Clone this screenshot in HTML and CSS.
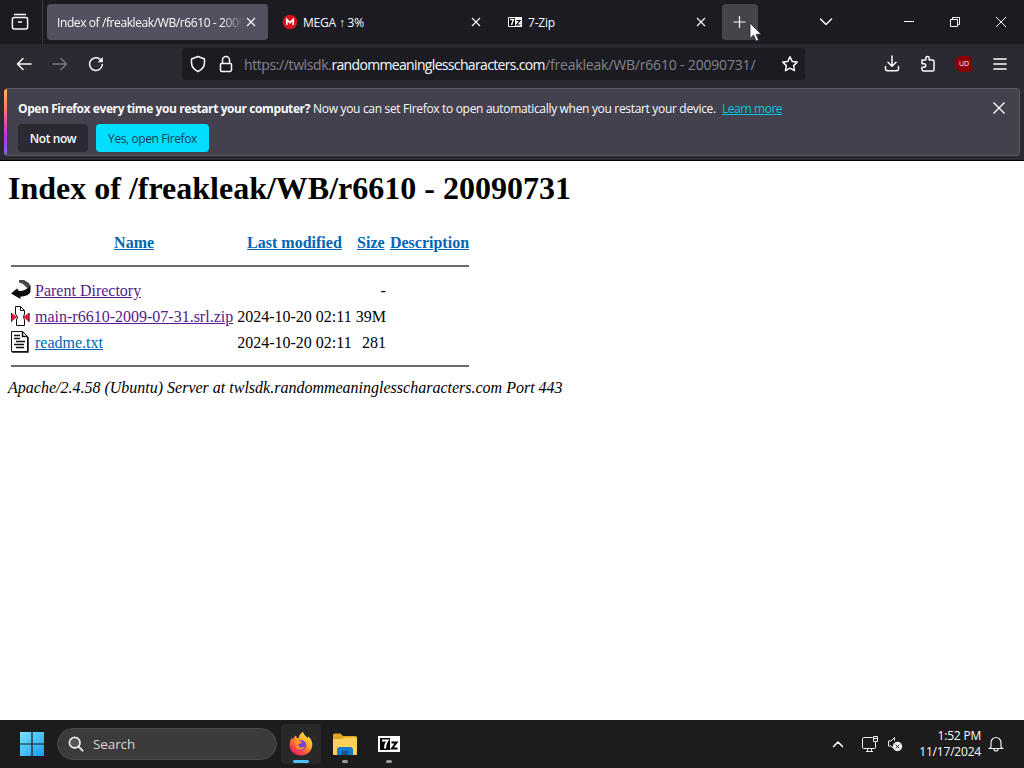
FILE: index.html
```
<!DOCTYPE html>
<html lang="en">
<head>
    <meta charset="UTF-8">
    <meta name="viewport" content="width=device-width, initial-scale=1.0">
    <title>Index of /freakleak/WB/r6610 - 20090731</title>
    <link rel="stylesheet" href="styles.css">
</head>
<body>
    <div class="tabbar">
        <div class="view-button">
            <svg width="18" height="18" viewBox="0 0 18 18" class="line"><path d="M3.5 1.5h11M3 4.500h12a1.600 1.600 0 0 1 1.600 1.600v8a2 2 0 0 1-2 2H3.400a2 2 0 0 1-2-2v-8A1.600 1.600 0 0 1 3 4.500zM7.500 9h3"/></svg>
        </div>
        <div class="tab active">
            <span class="tab-title first-title">Index of /freakleak/WB/r6610 - 20090731</span>
            <svg class="tab-close" width="10" height="10" viewBox="0 0 10 10"><path d="M1 1l8 8M9 1l-8 8"/></svg>
        </div>
        <div class="tab">
            <svg class="tab-icon" width="16" height="16" viewBox="0 0 16 16"><circle cx="8" cy="8" r="7.300" fill="#d9111f"/><path d="M4.800 11V5.500L8 8.700l3.200-3.200V11" fill="none" stroke="#fff" stroke-width="1.700"/></svg>
            <span class="tab-title">MEGA ↑ 3%</span>
            <svg class="tab-close" width="10" height="10" viewBox="0 0 10 10"><path d="M1 1l8 8M9 1l-8 8"/></svg>
        </div>
        <div class="tab">
            <svg class="tab-icon" width="16" height="16" viewBox="0 0 16 16"><path d="M1.500 3.500h13v9h-13z" fill="#000" stroke="#fff"/><path d="M8 3h7v10H8z" fill="#fff"/><path d="M3 5.500h3.500L4.500 11" fill="none" stroke="#fff" stroke-width="1.500"/><path d="M9.500 6.500h3.500l-3.500 4.500h4" fill="none" stroke="#000" stroke-width="1.200"/></svg>
            <span class="tab-title">7-Zip</span>
            <svg class="tab-close" width="10" height="10" viewBox="0 0 10 10"><path d="M1 1l8 8M9 1l-8 8"/></svg>
        </div>
        <div class="new-tab">
            <svg width="14" height="14" viewBox="0 0 14 14" class="line thin"><path d="M6.500 1.500v11M1 7h11"/></svg>
            <svg class="cursor" width="14" height="21" viewBox="0 0 14 21"><path d="M1 1v15.500l3.600-3.400 2.500 6 2.500-1-2.500-5.800h5z" fill="#fff" stroke="#222" stroke-width=".8"/></svg>
        </div>
        <div class="window-buttons">
            <svg width="14" height="14" viewBox="0 0 14 14" class="line"><path d="M1.500 4L7 9.500 12.500 4"/></svg>
            <svg class="minimize" width="12" height="12" viewBox="0 0 12 12"><path d="M1 5.500h10"/></svg>
            <svg class="restore" width="12" height="12" viewBox="0 0 12 12"><path d="M1.500 3.500h7v7h-7zM3.500 3V1.500h7v7H9"/></svg>
            <svg class="close" width="12" height="12" viewBox="0 0 12 12"><path d="M1 1l10 10M11 1L1 11"/></svg>
        </div>
    </div>

    <div class="navbar">
        <div class="nav-buttons">
            <svg width="16" height="16" viewBox="0 0 16 16" class="line"><path d="M15 8H1.500M7 2.500L1.500 8 7 13.500"/></svg>
            <svg width="16" height="16" viewBox="0 0 16 16" class="line disabled"><path d="M1 8h13.500M9 2.500L14.500 8 9 13.500"/></svg>
            <svg width="16" height="16" viewBox="0 0 16 16" class="line"><path d="M14.300 8.500A6.400 6.400 0 1 1 11.500 2.800L13.500 4.500"/><path d="M14.800 1v5.200H9.600z" fill="#fbfbfe" stroke="none"/></svg>
        </div>
        <div class="urlbar">
            <svg width="16" height="18" viewBox="0 0 16 18" class="line"><path d="M8 1.500L14.500 4v3.500c0 4-2.500 7.300-6.500 9-4-1.700-6.500-5-6.500-9V4z"/></svg>
            <svg width="14" height="18" viewBox="0 0 14 18" class="line"><path d="M3.500 8V5a3.500 3.500 0 0 1 7 0v3M2.500 8.500h9a1 1 0 0 1 1 1v5.500a1.500 1.500 0 0 1-1.500 1.500H3A1.500 1.500 0 0 1 1.500 15V9.500a1 1 0 0 1 1-1z"/></svg>
            <span class="url"><span class="scheme">https://twlsdk.</span><b>randommeaninglesscharacters.com</b>/freakleak/WB/r6610 - 20090731/</span>
            <svg width="18" height="18" viewBox="0 0 18 18" class="line"><path d="M9 1.800l2.200 4.600 5 .7-3.600 3.500.9 5-4.500-2.400-4.500 2.400.9-5L1.800 7.100l5-.7z"/></svg>
        </div>
        <div class="toolbar">
            <svg width="16" height="18" viewBox="0 0 16 18" class="line"><path d="M8 1v10M4 7.300l4 4 4-4M1.500 11.500v2.300a2 2 0 0 0 2 2h9a2 2 0 0 0 2-2v-2.300"/></svg>
            <svg width="16" height="18" viewBox="0 0 16 18" class="line"><path d="M2 5h3.800V3.300a1.700 1.700 0 0 1 3.400 0V5h3.300a1.500 1.500 0 0 1 1.500 1.500v8a1.500 1.500 0 0 1-1.500 1.500h-9A1.500 1.500 0 0 1 2 14.500v-2.200h2a1.700 1.700 0 0 0 0-3.500H2z"/></svg>
            <div class="ublock">UD</div>
            <svg width="14" height="14" viewBox="0 0 14 14" class="line menu"><path d="M1 2h12M1 7h12M1 12h12"/></svg>
        </div>
    </div>

    <div class="notification-wrap">
        <div class="notification">
            <div class="notification-body">
                <p class="message"><b>Open Firefox every time you restart your computer?</b> <span class="detail">Now you can set Firefox to open automatically when you restart your device.</span> <a href="#">Learn more</a></p>
                <div class="actions">
                    <button class="action">Not now</button>
                    <button class="action primary">Yes, open Firefox</button>
                </div>
            </div>
            <svg class="dismiss" width="14" height="14" viewBox="0 0 14 14"><path d="M1.500 1.500l11 11M12.500 1.500l-11 11"/></svg>
        </div>
    </div>

    <div class="page">
        <h1>Index of /freakleak/WB/r6610 - 20090731</h1>
        <table>
            <tr><th class="icon"></th><th><a href="#">Name</a></th><th><a href="#">Last modified</a></th><th><a href="#">Size</a></th><th><a href="#">Description</a></th></tr>
            <tr><th colspan="5"><hr></th></tr>
            <tr>
                <td class="icon"><svg width="20" height="22" viewBox="0 0 20 22"><path d="M8 1h5l5 3 1.500 4-3.500 1-4-4-4-1.500z" fill="#4a4a4a"/><path d="M19.500 6v6c0 3-4 5.500-10 5.500V20L0 14.500l6-5 2 2.500c5 0 8.500-2 11.500-6z" fill="#0c0c0c"/></svg></td>
                <td><a href="#" class="visited">Parent Directory</a></td><td>&nbsp;</td><td class="size">&nbsp; - </td><td>&nbsp;</td>
            </tr>
            <tr>
                <td class="icon"><svg width="20" height="22" viewBox="0 0 20 22"><path d="M4.500 7V1.500h5l4 4V9l-1 3 1 3v5.500h-8V15l1-3-2-3z" fill="#fff" stroke="#111"/><path d="M9.500 1.500v4h4" fill="none" stroke="#111"/><path d="M0 8l5.500 4L0 16.500zM18 8l-5 4 5 4.500z" fill="#e21b3c" stroke="#e21b3c"/><path d="M.5 8v9M18 8v9" stroke="#333"/></svg></td>
                <td><a href="#" class="visited">main-r6610-2009-07-31.srl.zip</a></td><td class="size">2024-10-20 02:11</td><td class="size">39M</td><td>&nbsp;</td>
            </tr>
            <tr>
                <td class="icon"><svg width="20" height="22" viewBox="0 0 20 22"><path d="M.5.500h11l5 5v15H.5z" fill="#fff" stroke="#111"/><path d="M11.500.500v5h5M17 6v15H1" fill="none" stroke="#111" stroke-width="1.500"/><path d="M3 4.500h6M3 7.500h6M5 10.500h9M3 13.500h10M5 16.500h8" stroke="#111" stroke-width="1.500"/></svg></td>
                <td><a href="#">readme.txt</a></td><td class="size">2024-10-20 02:11</td><td class="size">281</td><td>&nbsp;</td>
            </tr>
            <tr><th colspan="5"><hr></th></tr>
        </table>
        <address>Apache/2.4.58 (Ubuntu) Server at twlsdk.randommeaninglesscharacters.com Port 443</address>
    </div>

    <div class="taskbar">
        <svg class="start" width="24" height="24" viewBox="0 0 24 24">
            <linearGradient id="win" x1="0" y1="0" x2="1" y2="1"><stop offset="0" stop-color="#7fe3fb"/><stop offset="1" stop-color="#169cf0"/></linearGradient>
            <path d="M0 0h11.400v11.400H0zM12.600 0H24v11.400H12.600zM0 12.600h11.400V24H0zM12.600 12.600H24V24H12.600z" fill="url(#win)"/>
        </svg>
        <div class="search">
            <svg width="16" height="16" viewBox="0 0 16 16"><circle cx="6.700" cy="6.700" r="5.300" fill="#555" stroke="#e8e8e8" stroke-width="1.800"/><path d="M10.600 10.600l4 4" stroke="#e8e8e8" stroke-width="2" stroke-linecap="round"/></svg>
            <span>Search</span>
        </div>
        <div class="app current">
            <svg width="24" height="24" viewBox="0 0 24 24">
                <linearGradient id="fox" x1=".85" y1=".05" x2=".2" y2="1"><stop offset="0" stop-color="#fff04a"/><stop offset=".45" stop-color="#ff9a22"/><stop offset=".75" stop-color="#ff4540"/><stop offset="1" stop-color="#e81b68"/></linearGradient>
                <path d="M14 0c1 3 3 4 4.500 6l1-1.500C22 7 23.500 10 23.300 13c-.3 6-5 10.500-11.300 10.500C5.500 23.500.700 19 .700 13c0-3.500 1-5.500 2.300-7.500L4 8c.5-2 1.500-3.500 3-4.500.2 1.500 1 2.500 2.500 3 .5-3 2-5.500 4.500-6.500z" fill="url(#fox)"/>
                <circle cx="12" cy="13.200" r="5.300" fill="#7b42d8"/><path d="M6.500 9.500C9 8 11 8.500 13 10c-1 1.800-3 1.500-4 3 .5 3 5 3.500 7 .5-.5 5-7.500 6-9.500 1z" fill="#ff9222"/>
            </svg>
            <i class="indicator"></i>
        </div>
        <div class="app">
            <svg width="26" height="24" viewBox="0 0 26 24"><path d="M1 3A1.500 1.500 0 0 1 2.500 1.500h6L11 4h12.500A1.500 1.500 0 0 1 25 5.500V21H1z" fill="#e2a51e"/><path d="M1 7h9l2-1.500h13V22a1 1 0 0 1-1 1H2a1 1 0 0 1-1-1z" fill="#ffd05a"/><path d="M5 23v-5a3 3 0 0 1 3-3h10a3 3 0 0 1 3 3v5z" fill="#1979cc"/><path d="M9.500 23v-3a1 1 0 0 1 1-1h5a1 1 0 0 1 1 1v3z" fill="#125793"/></svg>
            <i class="indicator"></i>
        </div>
        <div class="app">
            <svg width="22" height="24" viewBox="0 0 22 24"><path d="M0 4h22v16H0z" fill="#fff"/><path d="M2 6h10v12H2z" fill="#000"/><path d="M4 8.500h5.500C7.500 11 7 13 7 16.500" fill="none" stroke="#fff" stroke-width="2"/><path d="M13.500 10.500h5l-4.500 6h5.500" fill="none" stroke="#000" stroke-width="2"/></svg>
            <i class="indicator"></i>
        </div>
        <div class="tray">
            <svg width="12" height="8" viewBox="0 0 12 8" class="line"><path d="M1.500 6.500L6 2l4.500 4.500"/></svg>
            <svg class="network" width="18" height="18" viewBox="0 0 18 18"><path d="M11.500 2.500h-9a1 1 0 0 0-1 1v9a1 1 0 0 0 1 1h11a1 1 0 0 0 1-1V8M5 16.500h7M6.500 14v2M10.500 14v2M12.500 1.500h4v5h-4zM14.500 7v6M12.500 3.500h4"/></svg>
            <svg class="volume" width="16" height="16" viewBox="0 0 16 16"><path d="M7.500 1.500v3M7.500 1.500L4 5H1.500v5H4l2 2" fill="none" stroke="#eee"/><circle cx="10.500" cy="10.500" r="4.700" fill="#eee"/><path d="M8.700 8.700l3.600 3.600M12.300 8.700l-3.600 3.600" stroke="#222"/></svg>
            <div class="clock"><span class="time">1:52 PM</span><span class="date">11/17/2024</span></div>
            <svg class="bell" width="16" height="16" viewBox="0 0 16 16"><path d="M3 11V6.500a5 5 0 0 1 10 0V11l1.500 1.500h-13zM6 13a2 2 0 0 0 4 0"/></svg>
        </div>
    </div>
</body>
</html>
```
FILE: styles.css
```
* {
    box-sizing: border-box;
}
body {
    margin: 0;
    width: 1024px;
    height: 768px;
    overflow: hidden;
    display: flex;
    flex-direction: column;
    background-color: white;
    font-family: "Open Sans", "Noto Sans", sans-serif;
    font-size: 12px;
    color: #fbfbfe;
}
svg {
    display: block;
    flex-shrink: 0;
    fill: none;
}
.line {
    stroke: #fbfbfe;
    stroke-width: 1.5;
    stroke-linecap: round;
    stroke-linejoin: round;
}
.line.thin {
    stroke-width: 1.2;
}
.line.disabled {
    stroke: #77767e;
}

/* tabs */
.tabbar {
    height: 44px;
    background-color: #1c1b22;
    display: flex;
    align-items: center;
    flex-shrink: 0;
}
.view-button {
    width: 43px;
    height: 44px;
    padding: 13px 11px;
    border-right: 1px solid #3a3944;
    margin-right: 4px;
}
.tab {
    width: 221px;
    height: 36px;
    margin-right: 4px;
    padding: 0 12px 0 10px;
    display: flex;
    align-items: center;
    border-radius: 4px;
}
.tab.active {
    background-color: #53515f;
}
.tab-icon {
    margin-right: 5px;
}
.tab-title {
    flex: 1;
    white-space: nowrap;
    overflow: hidden;
    letter-spacing: -0.2px;
}
.first-title {
    letter-spacing: -0.4px;
    -webkit-mask-image: linear-gradient(to left, transparent, black 22px);
    mask-image: linear-gradient(to left, transparent, black 22px);
}
.tab-close {
    margin-left: 3px;
    stroke: #fbfbfe;
    stroke-width: 1.1;
}
.new-tab {
    position: relative;
    width: 36px;
    height: 36px;
    padding: 11px;
    border-radius: 4px;
    background-color: #45444b;
}
.cursor {
    position: absolute;
    left: 27px;
    top: 18px;
}
.window-buttons {
    margin-left: auto;
    padding-right: 17px;
    display: flex;
    align-items: center;
    stroke: #fbfbfe;
}
.minimize {
    margin-left: 70px;
}
.restore,
.close {
    margin-left: 34px;
}

/* address bar */
.navbar {
    height: 40px;
    background-color: #2b2a33;
    display: flex;
    align-items: center;
    flex-shrink: 0;
}
.nav-buttons {
    width: 182px;
    padding-left: 16px;
    display: flex;
    gap: 20px;
}
.urlbar {
    width: 623px;
    height: 32px;
    padding: 0 6px 0 8px;
    display: flex;
    align-items: center;
    border-radius: 4px;
    background-color: #1c1b22;
}
.urlbar svg + svg {
    margin-left: 13px;
}
.url {
    flex: 1;
    margin-left: 11px;
    font-size: 14px;
    letter-spacing: -0.18px;
    white-space: nowrap;
    color: #85848c;
}
.scheme {
    letter-spacing: -0.4px;
}
.url b {
    font-weight: normal;
    letter-spacing: -0.66px;
    color: #fbfbfe;
}
.toolbar {
    margin-left: auto;
    padding-right: 17px;
    display: flex;
    align-items: center;
    gap: 20px;
}
.menu {
    margin-left: 1px;
}
.ublock {
    width: 16px;
    height: 16px;
    border-radius: 5px;
    background-color: #8b0000;
    font-size: 7px;
    line-height: 16px;
    text-align: center;
}

/* notification */
.notification-wrap {
    height: 77px;
    padding: 4px;
    background-color: #2b2a33;
    border-bottom: 1px solid #000;
    flex-shrink: 0;
}
.notification {
    height: 68px;
    display: flex;
    justify-content: space-between;
    border: 1px solid #5b5966;
    border-left: 0;
    border-radius: 4px;
    background: linear-gradient(#ffbd4f, #ff6a75 35%, #b833e1 70%, #7a6be0) 0 0 / 3px 100% no-repeat #42414d;
}
.notification-body {
    padding: 11px 0 0 14px;
}
.message {
    margin: 0;
    line-height: 18px;
    white-space: nowrap;
}
.message b {
    letter-spacing: -0.41px;
}
.detail {
    letter-spacing: -0.32px;
}
.message a {
    margin-left: 3px;
    letter-spacing: -0.5px;
    color: #00c5df;
}
.actions {
    display: flex;
    gap: 8px;
    margin-top: 6px;
}
.action {
    width: 70px;
    height: 28px;
    padding: 0;
    border: none;
    border-radius: 4px;
    background-color: #2b2a33;
    color: #fbfbfe;
    font: 600 12px "Open Sans", sans-serif;
    letter-spacing: -0.4px;
}
.action.primary {
    width: 113px;
    background-color: #00ddff;
    color: #183d52;
    font-weight: normal;
}
.dismiss {
    margin: 12px 13px 0 0;
    stroke: #fbfbfe;
    stroke-width: 1.4;
}

/* directory listing */
.page {
    flex: 1;
    padding: 9px 8px 8px;
    background-color: #fff;
    color: #000;
    font-family: "Liberation Serif", serif;
    font-size: 16px;
}
h1 {
    margin: 0 0 21px;
    font-size: 32px;
    line-height: 37px;
}
table {
    border-spacing: 2px;
}
th,
td {
    padding: 1px;
    line-height: 18px;
    white-space: nowrap;
}
td {
    padding-top: 3px;
}
.icon {
    height: 24px;
    padding: 1px;
}
th {
    padding-top: 2px;
}
th[colspan] {
    padding: 1px;
}
.size {
    text-align: right;
}
hr {
    height: 2px;
    margin: 8px 0;
    border: none;
    background-color: #6b6b6b;
}
address {
    margin-top: 1px;
}
.page a {
    color: #0066b3;
}
.page a.visited {
    color: #551a8b;
}

/* taskbar */
.taskbar {
    height: 48px;
    padding-left: 20px;
    display: flex;
    align-items: center;
    flex-shrink: 0;
    background-color: #1c1c1c;
}
.search {
    width: 220px;
    height: 32px;
    margin-left: 13px;
    margin-right: 4px;
    padding-left: 10px;
    display: flex;
    align-items: center;
    gap: 9px;
    border: 1px solid #484848;
    border-radius: 16px;
    background-color: #3b3b3b;
    color: #d8d8d8;
    font-size: 13.5px;
    letter-spacing: -0.1px;
}
.app {
    width: 40px;
    height: 40px;
    margin-right: 4px;
    padding-top: 8px;
    display: flex;
    flex-direction: column;
    align-items: center;
    border-radius: 4px;
}
.app.current {
    background-color: #292929;
}
.indicator {
    width: 6px;
    height: 3px;
    margin-top: 4px;
    border-radius: 2px;
    background-color: #9a9a9a;
}
.current .indicator {
    width: 16px;
    background-color: #4cc2ff;
}
.tray {
    margin-left: auto;
    padding-right: 20px;
    display: flex;
    align-items: center;
}
.network {
    margin-left: 17px;
    stroke: #eee;
}
.volume {
    margin-left: 8px;
}
.clock {
    width: 78px;
    display: flex;
    flex-direction: column;
    align-items: flex-end;
    line-height: 16px;
}
.time,
.date {
    letter-spacing: -0.2px;
}
.bell {
    margin-left: 7px;
    stroke: #eee;
    stroke-width: 1.2;
}
```
